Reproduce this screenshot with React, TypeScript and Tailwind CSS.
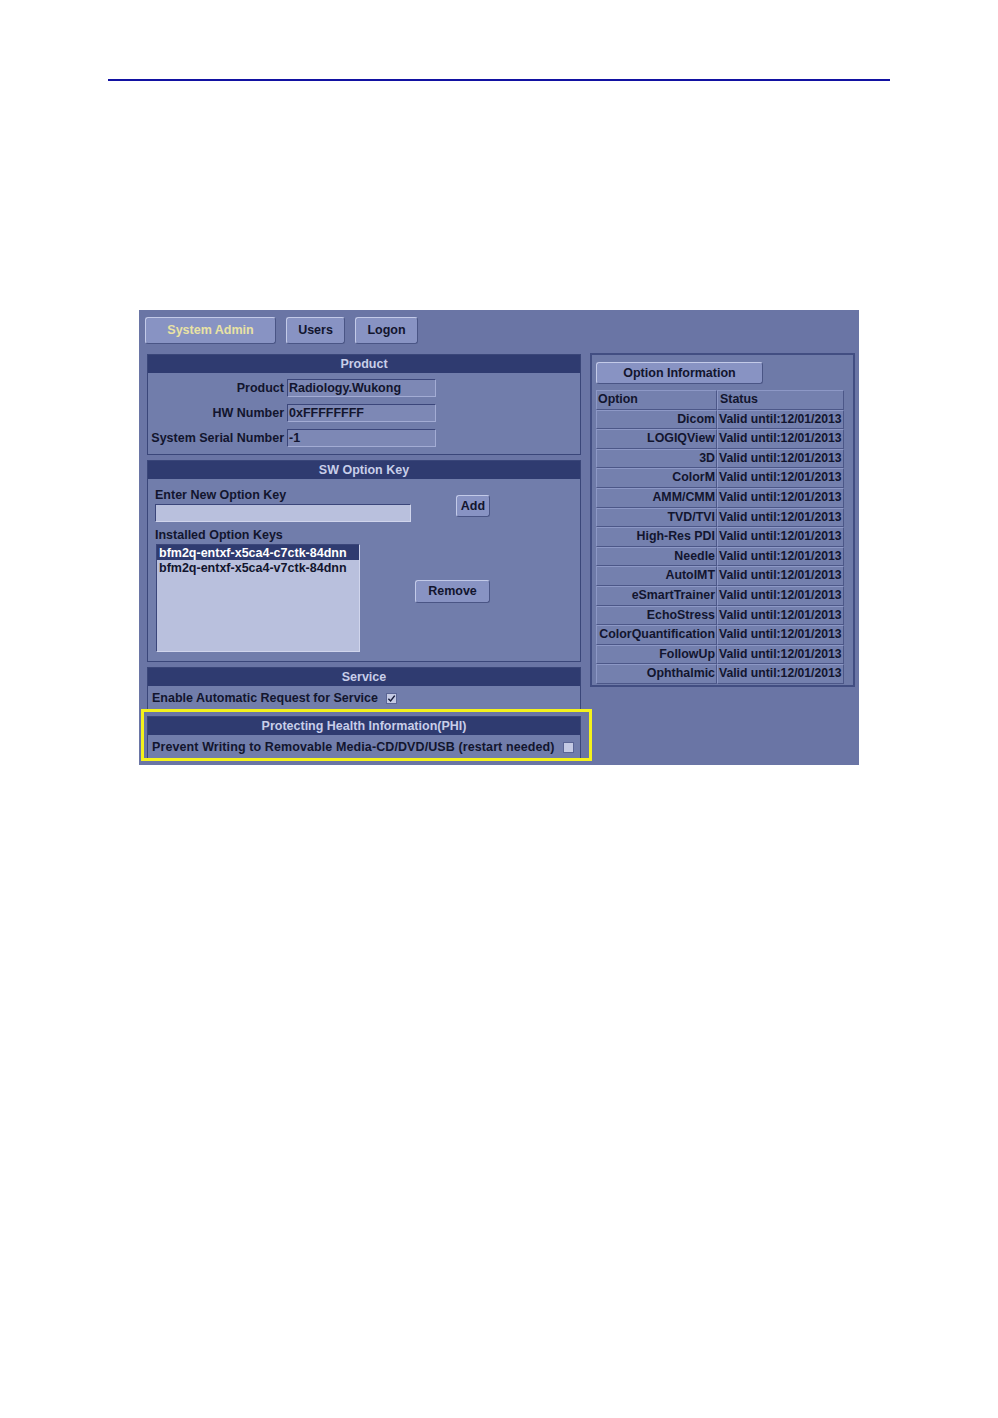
const font = { fontFamily: '"Liberation Sans", Arial, sans-serif' };

const options = [
  "Dicom",
  "LOGIQView",
  "3D",
  "ColorM",
  "AMM/CMM",
  "TVD/TVI",
  "High-Res PDI",
  "Needle",
  "AutoIMT",
  "eSmartTrainer",
  "EchoStress",
  "ColorQuantification",
  "FollowUp",
  "Ophthalmic",
];

function UiButton({ label, className, active }: { label: string; className: string; active?: boolean }) {
  return (
    <div
      className={`flex items-center justify-center rounded-[3px] border border-t-[#c3cae8] border-l-[#c3cae8] border-b-[#4a5585] border-r-[#4a5585] bg-[#8893c3] text-[12.5px] font-bold ${
        active ? "text-[#e9e2a4]" : "text-[#12152e]"
      } ${className}`}
    >
      {label}
    </div>
  );
}

function SectionHeader({ title, className = "h-[18px]" }: { title: string; className?: string }) {
  return (
    <div className={`flex items-center justify-center bg-[#2f3b70] text-[12.5px] font-bold text-[#c8cee9] ${className}`}>
      {title}
    </div>
  );
}

function Field({ value }: { value: string }) {
  return (
    <div className="flex h-[18px] w-[149px] items-center border border-t-[#3b467a] border-l-[#3b467a] border-b-[#a3acd4] border-r-[#a3acd4] bg-[#7d88b5] pl-[1px] text-[12.5px] font-bold leading-[16px] text-[#12152e]">
      {value}
    </div>
  );
}

function Checkbox({ checked }: { checked?: boolean }) {
  return (
    <span className="inline-flex h-[11px] w-[11px] items-center justify-center border border-[#5a6595] bg-[#c4cae4]">
      {checked && (
        <svg viewBox="0 0 10 10" className="h-[9px] w-[9px]">
          <path d="M1.5 5.2 L4 7.8 L8.6 1.8" fill="none" stroke="#151a38" strokeWidth="1.6" />
        </svg>
      )}
    </span>
  );
}

function ProductSection() {
  const rows = [
    ["Product", "Radiology.Wukong"],
    ["HW Number", "0xFFFFFFFF"],
    ["System Serial Number", "-1"],
  ];
  return (
    <div className="border border-[#3a4679]">
      <SectionHeader title="Product" />
      <div className="flex h-[81px] flex-col gap-[7px] bg-[#717dab] pt-[6px]">
        {rows.map(([label, value]) => (
          <div key={label} className="flex h-[18px] items-center">
            <div className="w-[139px] pr-[3px] text-right text-[12.5px] font-bold leading-[18px] text-[#12152e]">{label}</div>
            <Field value={value} />
          </div>
        ))}
      </div>
    </div>
  );
}

function SwOptionSection() {
  return (
    <div className="border border-[#3a4679]">
      <SectionHeader title="SW Option Key" />
      <div className="flex h-[182px] bg-[#717dab] pl-[7px] pt-[8px] text-[12.5px] font-bold text-[#12152e]">
        <div className="flex w-[256px] flex-col">
          <div className="h-[16px] leading-[16px]">Enter New Option Key</div>
          <div className="mt-[1px] h-[18px] border border-t-[#3b467a] border-l-[#3b467a] border-b-[#d0d5ec] border-r-[#d0d5ec] bg-[#b9c0dd]" />
          <div className="mt-[5px] h-[16px] leading-[16px]">Installed Option Keys</div>
          <div className="ml-[1px] mt-[1px] h-[108px] w-[204px] border border-t-[#3b467a] border-l-[#3b467a] border-b-[#d0d5ec] border-r-[#d0d5ec] bg-[#b9c0dd]">
            <div className="h-[15px] bg-[#2f3b70] pl-[2px] leading-[16px] text-white">bfm2q-entxf-x5ca4-c7ctk-84dnn</div>
            <div className="h-[15px] pl-[2px] leading-[16px] text-[#12152e]">bfm2q-entxf-x5ca4-v7ctk-84dnn</div>
          </div>
        </div>
        <div className="flex w-[79px] flex-col items-end">
          <UiButton label="Add" className="mt-[8px] h-[22px] w-[34px]" />
          <UiButton label="Remove" className="mt-[63px] h-[23px] w-[75px]" />
        </div>
      </div>
    </div>
  );
}

function ServiceSection() {
  return (
    <div className="border border-[#3a4679]">
      <SectionHeader title="Service" />
      <div className="flex h-[23px] items-center gap-[8px] bg-[#717dab] pl-[4px] pt-[1px] text-[12.5px] font-bold text-[#12152e]">
        <span>Enable Automatic Request for Service</span>
        <Checkbox checked />
      </div>
    </div>
  );
}

function PhiSection() {
  return (
    <div className="relative mt-[6px]">
      <div className="border border-[#3a4679]">
        <SectionHeader title="Protecting Health Information(PHI)" className="h-[18px]" />
        <div className="flex h-[25px] items-center gap-[8px] bg-[#717dab] pl-[4px] text-[12.5px] font-bold tracking-[0.1px] text-[#12152e]">
          <span>Prevent Writing to Removable Media-CD/DVD/USB (restart needed)</span>
          <Checkbox />
        </div>
      </div>
      <div className="pointer-events-none absolute left-[-6px] top-[-7px] h-[52px] w-[451px] border-[3px] border-[#f4f21c]" />
    </div>
  );
}

function OptionTable() {
  const cell = "border border-t-[#8d98c6] border-l-[#8d98c6] border-b-[#4c5788] border-r-[#4c5788] bg-[#7480ae]";
  return (
    <div className="mt-[6px] flex w-[248px] flex-col text-[12.4px] font-bold text-[#12152e]">
      <div className="flex h-[19.6px]">
        <div className={`${cell} w-[121px] pl-[1px] leading-[17px]`}>Option</div>
        <div className={`${cell} w-[127px] pl-[2px] leading-[17px]`}>Status</div>
      </div>
      {options.map((o) => (
        <div key={o} className="flex h-[19.6px]">
          <div className={`${cell} w-[121px] pr-[1px] text-right leading-[17px]`}>{o}</div>
          <div className={`${cell} w-[127px] whitespace-nowrap pl-[1px] text-[12.2px] leading-[17px]`}>Valid until:12/01/2013</div>
        </div>
      ))}
    </div>
  );
}

export default function App() {
  return (
    <div className="min-h-[1418px] w-[998px] bg-white" style={font}>
      <div className="pt-[79px]">
        <div className="ml-[108px] h-[2px] w-[782px] bg-[#1212a2]" />
      </div>
      <div className="ml-[139px] mt-[229px] h-[455px] w-[720px] bg-[#6a75a5] pl-[6px] pt-[7px]">
        <div className="flex gap-[10px]">
          <UiButton label="System Admin" active className="h-[27px] w-[131px]" />
          <UiButton label="Users" className="h-[27px] w-[59px]" />
          <UiButton label="Logon" className="h-[27px] w-[63px]" />
        </div>
        <div className="mt-[9px] flex">
          <div className="ml-[2px] mt-[1px] flex w-[434px] flex-col">
            <ProductSection />
            <div className="mt-[5px]">
              <SwOptionSection />
            </div>
            <div className="mt-[5px]">
              <ServiceSection />
            </div>
            <PhiSection />
          </div>
          <div className="ml-[9px] flex h-[334px] w-[265px] flex-col border-2 border-[#424e82] bg-[#6e7aa8] pl-[4px] pt-[7px]">
            <UiButton label="Option Information" className="h-[22px] w-[167px]" />
            <OptionTable />
          </div>
        </div>
      </div>
    </div>
  );
}
